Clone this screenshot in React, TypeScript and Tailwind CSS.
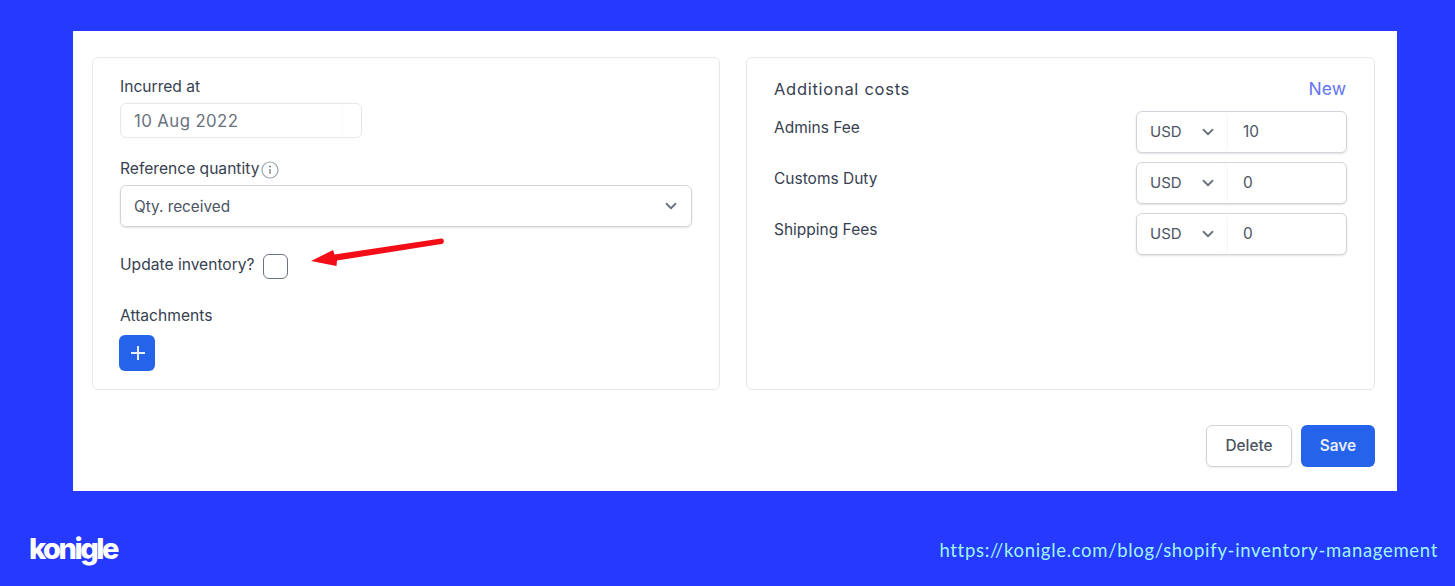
import React from "react";

function Chevron({ className }: { className: string }) {
  return (
    <svg viewBox="0 0 20 20" fill="none" className={className}>
      <path d="M5 7.500l5 5 5-5" stroke="currentColor" strokeWidth="2" strokeLinecap="round" strokeLinejoin="round" />
    </svg>
  );
}

function CostRow({ label, value }: { label: string; value: string }) {
  return (
    <div className="flex h-[42px] items-start justify-between">
      <span className="mt-[7px] text-[15.500px] leading-[20px] text-[#374151]">{label}</span>
      <div className="flex h-[42px] w-[211px] items-center rounded-[6px] border border-[#d1d5db] bg-white shadow-[0_1px_2px_rgba(0,0,0,0.12)]">
        <div className="flex h-full w-[91px] items-center rounded-[6px] border-r border-[#f3f4f6] pl-[13px]">
          <span className="text-[15px] text-[#4b5563]">USD</span>
          <Chevron className="ml-[17px] h-[18px] w-[18px] text-[#6b7280]" />
        </div>
        <span className="ml-[15px] text-[15.400px] text-[#4b5563]">{value}</span>
      </div>
    </div>
  );
}

export default function App() {
  return (
    <div className="flex h-[586px] w-[1455px] flex-col overflow-hidden bg-[#2539ff] pt-[31px] font-['Inter',sans-serif]">
      <main className="ml-[73px] flex h-[460px] w-[1324px] flex-col bg-white px-[19px] pt-[26px]">
        <div className="flex h-[333px] gap-[26px]">
          <section className="flex w-[628px] flex-col rounded-[6px] border border-[#e5e7eb] pl-[27px] pr-[27px] pt-[19px]">
            <label className="text-[15.600px] leading-[20px] text-[#374151]">Incurred at</label>
            <div className="mt-[6px] flex h-[35px] w-[242px] items-center rounded-[6px] border border-[#e5e7eb] pl-[13px] text-[16.800px] tracking-[0.4px] text-[#6b7280]">
              <span className="flex h-full w-[209px] items-center border-r border-[#f9fafb] pt-[3px]">10 Aug 2022</span>
            </div>
            <div className="mt-[21px] flex h-[20px] items-center">
              <span className="text-[15.600px] leading-[20px] text-[#374151]">Reference quantity</span>
              <svg viewBox="0 0 18 18" fill="none" className="ml-[2px] mt-[1px] h-[18px] w-[18px] text-[#9ca3af]">
                <circle cx="9" cy="9" r="8" stroke="currentColor" strokeWidth="1.2" />
                <circle cx="9" cy="5.500" r="0.9" fill="#6b7280" />
                <path d="M9 8v5" stroke="#6b7280" strokeWidth="1.2" />
              </svg>
            </div>
            <div className="mt-[6px] flex h-[42px] w-[572px] items-center justify-between rounded-[6px] border border-[#d1d5db] pl-[13px] pr-[11px] shadow-[0_1px_2px_rgba(0,0,0,0.12)]">
              <span className="pt-[2px] text-[15.300px] text-[#4b5563]">Qty. received</span>
              <Chevron className="h-[18px] w-[18px] text-[#6b7280]" />
            </div>
            <div className="mt-[25px] flex h-[26px] items-center">
              <span className="text-[15.600px] leading-[20px] text-[#374151]">Update inventory?</span>
              <span className="ml-[8px] mt-[2px] h-[25px] w-[25px] rounded-[6px] border-[1.5px] border-[#6b7280] bg-white" />
              <svg viewBox="0 0 134 32" className="ml-[22px] -mt-[25px] h-[32px] w-[134px]">
                <path d="M1 24L23 13L24.500 17.500L131 1.500C134.500 1 135 6.500 131.500 7L27 23.500L26.500 29Z" fill="#f20d17" />
              </svg>
            </div>
            <label className="mt-[28px] text-[15.600px] leading-[20px] text-[#374151]">Attachments</label>
            <button className="-ml-[1px] mt-[9px] flex h-[36px] w-[36px] items-center justify-center rounded-[6px] bg-[#2563eb] pl-[1px]">
              <svg viewBox="0 0 16 16" className="h-[16px] w-[16px]" fill="none">
                <path d="M8 1v14M1 8h14" stroke="#e8eefc" strokeWidth="2" />
              </svg>
            </button>
          </section>
          <section className="flex w-[629px] flex-col rounded-[6px] border border-[#e5e7eb] pl-[27px] pr-[27px] pt-[19px]">
            <div className="flex h-[24px] items-center justify-between">
              <h2 className="text-[16.500px] font-normal tracking-[0.72px] text-[#374151]">Additional costs</h2>
              <a className="mr-[1px] text-[17.500px] text-[#6374f6]">New</a>
            </div>
            <div className="mt-[10px] flex flex-col gap-[9px]">
              <CostRow label="Admins Fee" value="10" />
              <CostRow label="Customs Duty" value="0" />
              <CostRow label="Shipping Fees" value="0" />
            </div>
          </section>
        </div>
        <div className="mt-[35px] flex justify-end gap-[9px] pr-[3px]">
          <button className="h-[42px] w-[86px] rounded-[6px] border border-[#d1d5db] bg-white text-[15.400px] font-medium text-[#4b5563] shadow-[0_1px_2px_rgba(0,0,0,0.08)]">
            Delete
          </button>
          <button className="h-[42px] w-[74px] rounded-[6px] bg-[#2563eb] text-[15.400px] font-semibold text-[#e8eefc]">
            Save
          </button>
        </div>
      </main>
      <footer className="flex flex-1 items-center justify-between pl-[29px] pr-[17px] pt-[24px]">
        <span className="-mt-[4px] text-[29px] font-extrabold leading-none tracking-[-2.5px] text-white">konigle</span>
        <span className="font-['Lato',sans-serif] text-[18.500px] tracking-[0.69px] text-[#9ff5f5]">
          https://konigle.com/blog/shopify-inventory-management
        </span>
      </footer>
    </div>
  );
}
